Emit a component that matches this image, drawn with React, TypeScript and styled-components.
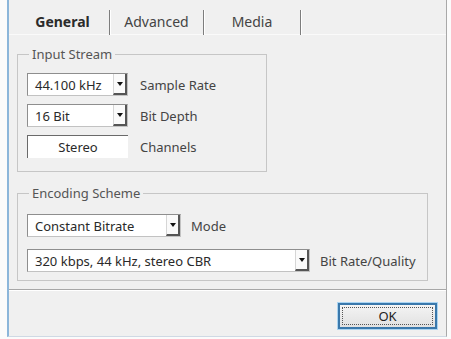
import React from "react";
import styled, { createGlobalStyle } from "styled-components";

const GlobalStyle = createGlobalStyle`
  html, body {
    margin: 0;
    padding: 0;
    background: #fbfbfb;
  }
  body {
    font-family: "Noto Sans", "Open Sans", sans-serif;
    font-size: 13px;
    color: #333;
  }
`;

const Frame = styled.div`
  box-sizing: border-box;
  width: 440px;
  height: 337px;
  margin-left: 7px;
  background: #f0f0f0;
  border-left: 2px solid #8cb6da;
  border-right: 1px solid #a9a9a9;
  border-bottom: 1px solid #cfd9e4;
  display: flex;
  flex-direction: column;
`;

const TabStrip = styled.div`
  box-sizing: border-box;
  display: flex;
  height: 35px;
  padding: 10px 0 0 7px;
  border-bottom: 1px solid #fafafa;
`;

const Tab = styled.div<{ $width: number; $active?: boolean }>`
  box-sizing: border-box;
  width: ${(p) => p.$width}px;
  height: 25px;
  display: flex;
  align-items: center;
  justify-content: center;
  padding-bottom: 2px;
  font-size: 14px;
  font-weight: ${(p) => (p.$active ? 700 : 400)};
  color: ${(p) => (p.$active ? "#2b2b2b" : "#444")};
  border-right: 1px solid #7d7d7d;
  box-shadow: 1px 0 0 #fff;
`;

const Content = styled.div`
  display: flex;
  flex-direction: column;
  padding: 10px 0 0 8px;
`;

const Group = styled.fieldset<{ $width: number; $top?: number }>`
  box-sizing: border-box;
  width: ${(p) => p.$width}px;
  margin: ${(p) => p.$top ?? 0}px 0 0 0;
  padding: 0;
  border: 1px solid #c6c6c6;
  min-width: 0;
`;

const Legend = styled.legend`
  margin-left: 11px;
  padding: 0 3px;
  line-height: 18px;
  color: #555;
`;

const Rows = styled.div<{ $gap: number; $top: number; $bottom: number }>`
  display: flex;
  flex-direction: column;
  gap: ${(p) => p.$gap}px;
  padding: ${(p) => p.$top}px 0 ${(p) => p.$bottom}px 9px;
`;

const Row = styled.div<{ $gap: number }>`
  display: flex;
  align-items: center;
  gap: ${(p) => p.$gap}px;
`;

const Combo = styled.div<{ $width: number }>`
  box-sizing: border-box;
  width: ${(p) => p.$width}px;
  height: 23px;
  display: flex;
  align-items: stretch;
  background: #fff;
  border: 1px solid #c2c2c2;
  border-top-color: #8e8e8e;
  border-left-color: #8e8e8e;
`;

const ComboText = styled.span`
  flex: 1;
  display: flex;
  align-items: center;
  padding-left: 7px;
  color: #2a2a2a;
  white-space: nowrap;
`;

const DropButton = styled.span`
  box-sizing: border-box;
  width: 14px;
  display: flex;
  align-items: center;
  justify-content: center;
  background: #fafafa;
  border-left: 1px solid #d6d6d6;
  border-right: 2px solid #555;
  border-bottom: 2px solid #555;

  &::after {
    content: "";
    border-left: 3.5px solid transparent;
    border-right: 3.5px solid transparent;
    border-top: 4px solid #111;
  }
`;

const StaticField = styled.div<{ $width: number }>`
  box-sizing: border-box;
  width: ${(p) => p.$width}px;
  height: 23px;
  display: flex;
  align-items: center;
  justify-content: center;
  background: #fff;
  border-top: 1px solid #6a6a6a;
  border-left: 1px solid #6a6a6a;
  color: #2a2a2a;
`;

const Label = styled.span`
  color: #444;
  white-space: nowrap;
`;

const Separator = styled.div`
  margin-top: 8px;
  border-top: 1px solid #a7a7a7;
  border-bottom: 1px solid #fff;
`;

const Footer = styled.div`
  display: flex;
  justify-content: flex-end;
  padding: 12px 9px 0 0;
`;

const OkButton = styled.button`
  box-sizing: border-box;
  width: 99px;
  height: 26px;
  padding: 0;
  border: 2px solid #3a78ab;
  background: linear-gradient(#f4f4f4, #e1e1e1);
  box-shadow: 0 0 0 1px #a9d4f2;
  outline: 1px dotted #555;
  outline-offset: -5px;
  font: inherit;
  color: #222;
`;

type ComboRow = { value: string; label: string; width: number };

const DropDown: React.FC<{ value: string; width: number }> = ({ value, width }) => (
  <Combo $width={width}>
    <ComboText>{value}</ComboText>
    <DropButton />
  </Combo>
);

const encodingRows: ComboRow[] = [
  { value: "Constant Bitrate", label: "Mode", width: 154 },
  { value: "320 kbps, 44 kHz, stereo CBR", label: "Bit Rate/Quality", width: 283 },
];

export default function App() {
  return (
    <>
      <GlobalStyle />
      <Frame>
        <TabStrip>
          <Tab $width={94} $active>
            General
          </Tab>
          <Tab $width={94}>Advanced</Tab>
          <Tab $width={97}>Media</Tab>
        </TabStrip>

        <Content>
          <Group $width={250}>
            <Legend>Input Stream</Legend>
            <Rows $gap={8} $top={10} $bottom={13}>
              <Row $gap={12}>
                <DropDown value="44.100 kHz" width={101} />
                <Label>Sample Rate</Label>
              </Row>
              <Row $gap={12}>
                <DropDown value="16 Bit" width={101} />
                <Label>Bit Depth</Label>
              </Row>
              <Row $gap={12}>
                <StaticField $width={101}>Stereo</StaticField>
                <Label>Channels</Label>
              </Row>
            </Rows>
          </Group>

          <Group $width={411} $top={12}>
            <Legend>Encoding Scheme</Legend>
            <Rows $gap={12} $top={12} $bottom={8}>
              {encodingRows.map((r) => (
                <Row key={r.label} $gap={10}>
                  <DropDown value={r.value} width={r.width} />
                  <Label>{r.label}</Label>
                </Row>
              ))}
            </Rows>
          </Group>
        </Content>

        <Separator />
        <Footer>
          <OkButton>OK</OkButton>
        </Footer>
      </Frame>
    </>
  );
}
